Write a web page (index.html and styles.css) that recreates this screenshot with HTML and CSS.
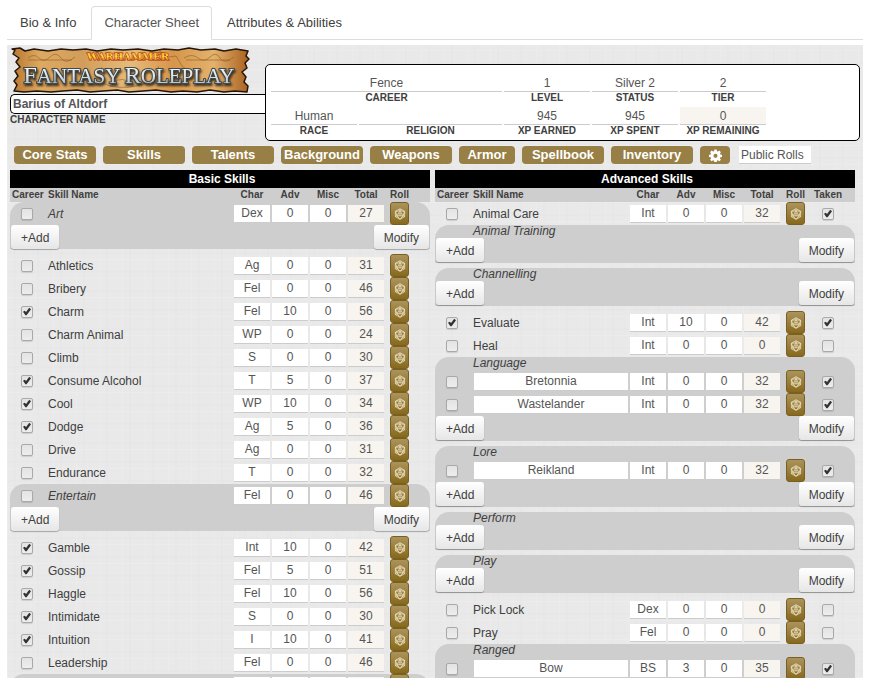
FILE: index.html
```html
<!DOCTYPE html>
<html lang="en">
<head>
<meta charset="utf-8">
<title>Character Sheet</title>
<link rel="stylesheet" href="styles.css">
</head>
<body>
<nav class="tabs">
  <a class="tab" href="#bio">Bio &amp; Info</a>
  <a class="tab tab-active" href="#sheet">Character Sheet</a>
  <a class="tab" href="#attributes">Attributes &amp; Abilities</a>
</nav>
<main class="sheet" id="sheet">
  <header class="head">
    <div class="identity">
      <svg class="logo" viewBox="0 0 240 45" role="img" aria-label="Warhammer Fantasy Roleplay">
        <defs>
          <linearGradient id="parchment" x1="0" y1="0" x2="1" y2="0">
            <stop offset="0" stop-color="#b9772f"/><stop offset=".12" stop-color="#dda961"/>
            <stop offset=".3" stop-color="#d29d5a"/><stop offset=".5" stop-color="#e6bb7a"/>
            <stop offset=".68" stop-color="#d6954a"/><stop offset=".85" stop-color="#e3b26c"/>
            <stop offset="1" stop-color="#a9601f"/>
          </linearGradient>
          <linearGradient id="steel" x1="0" y1="0" x2="0" y2="1">
            <stop offset="0" stop-color="#ffffff"/><stop offset=".5" stop-color="#e2e8ea"/><stop offset="1" stop-color="#9fb1b7"/>
          </linearGradient>
          <linearGradient id="fire" x1="0" y1="0" x2="0" y2="1">
            <stop offset="0" stop-color="#f0a020"/><stop offset=".5" stop-color="#ffe23c"/><stop offset="1" stop-color="#d8400e"/>
          </linearGradient>
        </defs>
        <path fill="url(#parchment)" stroke="#24140a" stroke-width="1.500" stroke-linejoin="round" d="M2 2l8-1 5 3 9-2 14 2 13-2 12 1 13-1 11 2 14-2 12 1 15-1 14 2 12-2 14 1 11-2 12 2 14-1 9 2 12-2 12 2-2 5 3 3-4 4 2 5-5 4 4 5-2 5 4 4-1 6-12-1-11 1-14-2-13 2-14-1-12 1-15-2-13 1-14 1-12-2-14 1-13 1-13-2-14 1-12 1-14-1-13 1-10-1 3-6-3-4 4-5-3-5 5-4-4-5 3-4-6-4 2-4z"/>
        <path fill="none" stroke="#8e5b2a" stroke-width="1" opacity=".6" d="M18 11q6-5 11 0t11-1 11 1 14-1M174 11q8-5 14 0t12-1 10 1 14-1M18 13h44M176 13h44M92 20q-8 15 8 19 18 4 36-3 18-6 12-17M102 36q10-8 22 2M148 3l10 7 8-1 6 10 8 6-4 15"/>
        <text class="logo-small" x="118" y="13" text-anchor="middle">WARHAMMER</text>
        <text class="logo-big" x="119" y="36" text-anchor="middle"><tspan class="logo-cap">F</tspan>ANTASY <tspan class="logo-cap">R</tspan>OLEPLAY</text>
      </svg>
      <input class="name" id="charname" value="Barius of Altdorf">
      <label class="caption name-caption" for="charname">CHARACTER NAME</label>
    </div>
    <section class="facts">
      <div class="fact fact-wide"><input class="field" id="career" value="Fence"><label class="caption" for="career">CAREER</label></div>
      <div class="fact"><input class="field" id="level" value="1"><label class="caption" for="level">LEVEL</label></div>
      <div class="fact"><input class="field" id="status" value="Silver 2"><label class="caption" for="status">STATUS</label></div>
      <div class="fact"><input class="field" id="tier" value="2"><label class="caption" for="tier">TIER</label></div>
      <div class="fact"><input class="field" id="race" value="Human"><label class="caption" for="race">RACE</label></div>
      <div class="fact"><input class="field" id="religion"><label class="caption" for="religion">RELIGION</label></div>
      <div class="fact"><input class="field" id="earned" value="945"><label class="caption" for="earned">XP EARNED</label></div>
      <div class="fact"><input class="field" id="spent" value="945"><label class="caption" for="spent">XP SPENT</label></div>
      <div class="fact"><input class="field computed" id="remaining" value="0" readonly><label class="caption" for="remaining">XP REMAINING</label></div>
    </section>
  </header>
  <div class="sections">
    <button class="section">Core Stats</button>
    <button class="section">Skills</button>
    <button class="section">Talents</button>
    <button class="section">Background</button>
    <button class="section">Weapons</button>
    <button class="section section-short">Armor</button>
    <button class="section">Spellbook</button>
    <button class="section">Inventory</button>
    <button class="section section-icon" aria-label="Settings">
      <svg class="gear" viewBox="0 0 14 14"><path fill="#fff" fill-rule="evenodd" d="M5.800 .5h2.400l.4 1.800 1 .4 1.600-1 1.600 1.700-1 1.500.4 1 1.800.4v2.300l-1.800.4-.4 1 1 1.600-1.600 1.600-1.600-1-1 .5-.4 1.800H5.800l-.4-1.800-1-.5-1.600 1-1.600-1.600 1-1.600-.4-1L0 8.600V6.300l1.800-.4.4-1-1-1.500 1.600-1.700 1.600 1 1-.4zM7 5.200a2.200 2.200 0 1 0 0 4.400 2.200 2.200 0 0 0 0-4.400z"/></svg>
    </button>
    <select class="rolls" aria-label="Rolls"><option>Public Rolls</option></select>
  </div>
  <div class="columns">
    <table class="skills" id="basic"><caption class="title">Basic Skills</caption></table>
    <table class="skills" id="advanced"><caption class="title">Advanced Skills</caption></table>
  </div>
</main>
<script src="app.js"></script>
</body>
</html>
```
FILE: styles.css
```css
* { box-sizing: border-box; }

body {
  margin: 0;
  padding: 6px 9px 3px 7px;
  height: 100vh;
  overflow: hidden;
  display: flex;
  flex-direction: column;
  background: #fff;
  color: #404040;
  font: 12px/16px "Liberation Sans", Arial, sans-serif;
}

input, select, button { font: inherit; color: inherit; margin: 0; }

/* Tabs */
.tabs { display: flex; flex: none; border-bottom: 1px solid #ddd; margin-bottom: 5px; }
.tab {
  padding: 7px 12px;
  margin-bottom: -1px;
  border: 1px solid transparent;
  border-radius: 4px 4px 0 0;
  font-size: 13px;
  line-height: 18px;
  color: #404040;
  text-decoration: none;
}
.tab-active { margin-left: 2px; margin-right: 2px; border-color: #ddd; border-bottom-color: #fff; background: #fff; color: #555; }

/* Sheet with a faint woven texture */
.sheet {
  flex: 1;
  min-height: 0;
  overflow: hidden;
  padding: 2px 3px 0;
  background-color: #e9e9e9;
  background-image:
    repeating-linear-gradient(90deg, rgba(255,255,255,.12) 0 1px, transparent 1px 7px, rgba(0,0,0,.008) 7px 9px, transparent 9px 23px),
    repeating-linear-gradient(0deg, rgba(255,255,255,.12) 0 1px, transparent 1px 6px, rgba(0,0,0,.008) 6px 8px, transparent 8px 19px);
}

/* Header */
.head { display: flex; align-items: flex-start; }
.identity { width: 255px; flex: none; display: flex; flex-direction: column; }
.logo { width: 240px; height: 45px; margin-bottom: 2px; overflow: visible; }
.logo-small { font: bold 10px "DejaVu Serif", serif; fill: url(#fire); stroke: #a8260a; stroke-width: 1px; paint-order: stroke; }
.logo-big {
  font: 21px "Liberation Serif", serif;
  fill: url(#steel);
  stroke: #3d4a50;
  stroke-width: 2px;
  paint-order: stroke;
  filter: drop-shadow(1px 2px 1px #3b2a1a);
}
.logo-cap { font-size: 24px; }
.name {
  height: 20px;
  width: 100%;
  padding: 0 2px;
  border: 1px solid #000;
  border-right: 0;
  border-radius: 5px 0 0 5px;
  background: #fff;
  font-weight: bold;
  color: #555;
}
.caption { display: block; font-size: 10px; line-height: 12px; font-weight: bold; text-align: center; white-space: nowrap; }
.name-caption { text-align: left; }
.facts {
  flex: 1;
  margin-top: 17px;
  padding: 9px 5px 3px;
  border: 1px solid #000;
  border-radius: 5px;
  background: #fff;
  display: grid;
  grid-template-columns: 86px 143px repeat(3, 86px);
  gap: 3px 2px;
}
.fact-wide { grid-column: span 2; }
.field {
  appearance: none;
  display: block;
  width: 100%;
  height: 18px;
  padding: 0;
  border: 0;
  border-bottom: 1px solid #ccc;
  border-radius: 0;
  background: #fff;
  color: #555;
  text-align: center;
  text-align-last: center;
}
.computed { background: #f8f5f1; }

/* Section buttons */
.sections { display: flex; gap: 7px; padding: 5px 4px 6px; }
.section {
  width: 82px;
  height: 18px;
  padding: 0;
  border: 0;
  border-radius: 4px;
  background: #987f45;
  color: #fff;
  font-size: 13px;
  font-weight: bold;
  line-height: 18px;
}
.section-short { width: 56px; }
.section-icon { width: 30px; display: flex; align-items: center; justify-content: center; }
.gear { width: 13px; height: 13px; }
.rolls {
  appearance: none;
  width: 72px;
  height: 18px;
  margin-left: 2px;
  padding: 0 2px;
  border: 0;
  border-bottom: 1px solid #ccc;
  border-radius: 0;
  background: #fff;
  color: #555;
}

/* Skill tables */
.columns { display: grid; grid-template-columns: 1fr 1fr; gap: 5px; padding-right: 5px; align-items: start; }
.skills, .skills thead, .skills tbody { display: block; }
.title { display: block; background: #000; color: #fff; font-weight: bold; line-height: 18px; text-align: center; padding-left: 4px; }
.skills tr { display: grid; align-items: center; }
.row { height: 23px; grid-template-columns: 38px minmax(0, 1fr) repeat(4, 38px) 29px; padding-right: 16px; }
#advanced .row { grid-template-columns: 38px minmax(0, 1fr) repeat(4, 38px) 29px 36px; padding-right: 9px; }
.skills .heads { height: 14px; background: #cecece; }
.skills th { font-size: 10px; line-height: 14px; padding: 0; }
.skills .th-left { text-align: left; white-space: nowrap; }
.skills .th-left:first-child { padding-left: 2px; }
.skills td { padding: 0 1px; display: block; }
.skills .check { padding: 0 0 0 11px; display: flex; }
.skills .mid { display: flex; justify-content: center; padding: 0; }
.skills .skill { padding-left: 0; padding-top: 1px; }

.band { background: #cecece; border-radius: 14px 14px 0 0; }
#advanced .band { padding-bottom: 1px; }
.band + .band, .band + .plain { margin-top: 5px; }
.band .skill, .group { font-style: italic; }
.skills .group { padding-left: 38px; line-height: 13px; }
.skills .foot { display: flex; justify-content: space-between; padding: 0 1px; }
.action {
  height: 24px;
  padding: 2px 10px 0;
  border: 0;
  border-radius: 3px;
  background: linear-gradient(#fff, #e6e6e6);
  box-shadow: 0 1px 1px rgba(0,0,0,.3);
}
.roll {
  width: 19px;
  height: 23px;
  padding: 0;
  border: 1px solid #7a6020;
  border-radius: 3px;
  background: linear-gradient(#ab935c, #87691c);
  display: flex;
  align-items: center;
  justify-content: center;
}
.die { width: 12px; height: 12px; flex: none; }

.box {
  appearance: none;
  width: 12px;
  height: 12px;
  padding: 1px;
  border: 1px solid #a9a9a9;
  border-radius: 2px;
  background: linear-gradient(#e3e3e3, #ededed);
  box-shadow: 0 1px 1px rgba(0,0,0,.12);
}
.box:checked::after {
  content: "";
  display: block;
  width: 8px;
  height: 8px;
  background: #333;
  clip-path: polygon(0 52%, 22% 40%, 38% 56%, 78% 4%, 100% 22%, 45% 98%, 30% 98%);
}
```
FILE: app.js
```js
const DIE = '<svg class="die" viewBox="0 0 13 13" fill="none" stroke="#eadfc0" stroke-width=".9" stroke-linejoin="round">' +
  '<path d="M6.500 .8l5 2.800v5.800l-5 2.800-5-2.800V3.600z"/><path d="M6.500 3L3.200 8.500h6.600zM6.500 .8V3M1.500 3.600l5-.6 5 .6M1.500 3.600l1.700 4.900-1.700.9M11.500 3.600L9.800 8.500l1.700.9M3.200 8.500l3.300 3.700 3.300-3.700"/><path d="M5 7.500h3M5.500 5.800h2"/></svg>';

// Each skill: [career, name, characteristic, advances, total, taken]
const basic = [
  { band: true, rows: [[0, 'Art', 'Dex', 0, 27]], foot: true },
  { rows: [
    [0, 'Athletics', 'Ag', 0, 31], [0, 'Bribery', 'Fel', 0, 46], [1, 'Charm', 'Fel', 10, 56],
    [0, 'Charm Animal', 'WP', 0, 24], [0, 'Climb', 'S', 0, 30], [1, 'Consume Alcohol', 'T', 5, 37],
    [1, 'Cool', 'WP', 10, 34], [1, 'Dodge', 'Ag', 5, 36], [0, 'Drive', 'Ag', 0, 31], [0, 'Endurance', 'T', 0, 32]] },
  { band: true, rows: [[0, 'Entertain', 'Fel', 0, 46]], foot: true },
  { rows: [
    [1, 'Gamble', 'Int', 10, 42], [1, 'Gossip', 'Fel', 5, 51], [1, 'Haggle', 'Fel', 10, 56],
    [1, 'Intimidate', 'S', 0, 30], [1, 'Intuition', 'I', 10, 41], [0, 'Leadership', 'Fel', 0, 46]] },
  { band: true, rows: [[0, '', '', '', '']] }
];
const advanced = [
  { rows: [[0, 'Animal Care', 'Int', 0, 32, 1]] },
  { band: true, group: 'Animal Training', rows: [], foot: true },
  { band: true, group: 'Channelling', rows: [], foot: true },
  { rows: [[1, 'Evaluate', 'Int', 10, 42, 1], [0, 'Heal', 'Int', 0, 0, 0]] },
  { band: true, group: 'Language', rows: [[0, 'Bretonnia', 'Int', 0, 32, 1], [0, 'Wastelander', 'Int', 0, 32, 1]], foot: true },
  { band: true, group: 'Lore', rows: [[0, 'Reikland', 'Int', 0, 32, 1]], foot: true },
  { band: true, group: 'Perform', rows: [], foot: true },
  { band: true, group: 'Play', rows: [], foot: true },
  { rows: [[0, 'Pick Lock', 'Dex', 0, 0, 0], [0, 'Pray', 'Fel', 0, 0, 0]] },
  { band: true, group: 'Ranged', rows: [[0, 'Bow', 'BS', 3, 35, 1]] }
];

const box = (on, label) => `<input type="checkbox" class="box" aria-label="${label}"${on ? ' checked' : ''}>`;
const field = (value, label, extra = '') => `<td><input class="field ${extra}" aria-label="${label}" value="${value}"${extra ? ' readonly' : ''}></td>`;

function skillRow([career, name, char, adv, total, taken], group) {
  return `<tr class="row"><td class="check">${box(career, name + ' career')}</td>` +
    (group ? field(name, group) : `<td class="skill">${name}</td>`) +
    `<td><select class="field" aria-label="${name} characteristic"><option>${char}</option></select></td>` +
    field(adv, name + ' advances') + field(name ? 0 : '', name + ' misc') + field(total, name + ' total', 'computed') +
    `<td class="mid"><button class="roll" aria-label="Roll ${name}">${DIE}</button></td>` +
    (taken === undefined ? '' : `<td class="mid">${box(taken, name + ' taken')}</td>`) + '</tr>';
}

function fill(id, heads, blocks) {
  const head = heads.map((h, i) => `<th${i < 2 ? ' class="th-left"' : ''}>${h}</th>`).join('');
  const body = blocks.map(b => `<tbody class="${b.band ? 'band' : 'plain'}">` +
    (b.group ? `<tr><td class="group">${b.group}</td></tr>` : '') +
    b.rows.map(r => skillRow(r, b.group)).join('') +
    (b.foot ? '<tr><td class="foot"><button class="action">+Add</button><button class="action">Modify</button></td></tr>' : '') +
    '</tbody>').join('');
  document.getElementById(id).insertAdjacentHTML('beforeend', `<thead><tr class="row heads">${head}</tr></thead>${body}`);
}

const heads = ['Career', 'Skill Name', 'Char', 'Adv', 'Misc', 'Total', 'Roll'];
fill('basic', heads, basic);
fill('advanced', [...heads, 'Taken'], advanced);
```
